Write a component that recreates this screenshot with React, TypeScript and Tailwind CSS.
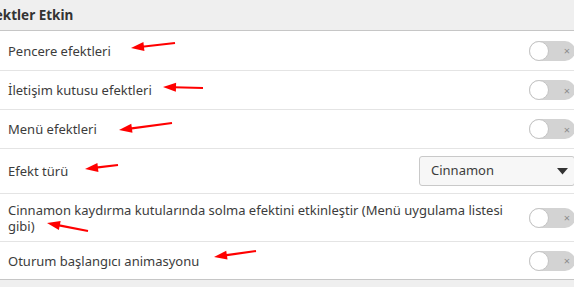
const font = { fontFamily: '"Noto Sans", "Open Sans", sans-serif' }

type Row = { label: string; kind: 'toggle' | 'select'; h: string }

const rows: Row[] = [
  { label: 'Pencere efektleri', kind: 'toggle', h: 'h-[39px]' },
  { label: 'İletişim kutusu efektleri', kind: 'toggle', h: 'h-[39px]' },
  { label: 'Menü efektleri', kind: 'toggle', h: 'h-[39px]' },
  { label: 'Efekt türü', kind: 'select', h: 'h-[45px]' },
  { label: 'Cinnamon kaydırma kutularında solma efektini etkinleştir (Menü uygulama listesi gibi)', kind: 'toggle', h: 'h-[48px]' },
  { label: 'Oturum başlangıcı animasyonu', kind: 'toggle', h: 'h-[38px]' },
]

const arrows: [number, number, number, number][] = [
  [175, 43, 131, 48],
  [203, 88, 163, 87],
  [172, 123, 119, 130],
  [118, 165, 85, 169],
  [88, 231, 47, 223],
  [256, 251, 214, 257],
]

function Toggle() {
  return (
    <div className="relative flex h-[20px] w-[46px] shrink-0 items-center rounded-full bg-[#d3d3d3]">
      <div className="h-[20px] w-[20px] rounded-full border border-[#c4c4c4] bg-white" />
      <span className="ml-auto mr-[5px] text-[11px] leading-none text-[#8c8c8c]">×</span>
    </div>
  )
}

function Select() {
  return (
    <div className="flex h-[30px] w-[156px] shrink-0 items-center rounded-[3px] border border-[#c9c9c9] bg-[#f7f7f7] pl-[11px] pr-[6px] text-[13px] text-[#3c3c3c]">
      <span>Cinnamon</span>
      <svg className="ml-auto" width="11" height="7" viewBox="0 0 11 7"><path d="M0 0h11L5.5 6.5z" fill="#333" /></svg>
    </div>
  )
}

function Arrow({ a }: { a: [number, number, number, number] }) {
  const [x1, y1, x2, y2] = a
  const dx = x2 - x1
  const dy = y2 - y1
  const len = Math.hypot(dx, dy)
  const ux = dx / len
  const uy = dy / len
  const bx = x2 - ux * 13
  const by = y2 - uy * 13
  const px = -uy * 4.5
  const py = ux * 4.5
  return (
    <g>
      <line x1={x1} y1={y1} x2={bx + ux * 2} y2={by + uy * 2} stroke="#ff0000" strokeWidth="2.2" />
      <polygon points={`${x2},${y2} ${bx + px},${by + py} ${bx - px},${by - py}`} fill="#ff0000" />
    </g>
  )
}

export default function App() {
  return (
    <div className="relative h-[287px] w-[574px] overflow-hidden bg-[#efefef]" style={font}>
      <div className="w-[583px]">
        <div className="flex h-[31px] items-center border-b border-[#c6c6c6] bg-[#efefef] pl-[8px]">
          <span className="-ml-[26px] text-[13.5px] font-bold text-[#333]">Efektler Etkin</span>
        </div>
        <div className="border-b border-[#c6c6c6] bg-white">
          {rows.map((r, i) => (
            <div
              key={r.label}
              className={`flex items-center gap-4 pl-[8px] pr-[8px] ${r.h} ${i > 0 ? 'border-t border-[#e4e4e4]' : ''}`}
            >
              <span className="max-w-[500px] text-[13px] leading-[16px] text-[#3c3c3c]">{r.label}</span>
              <div className="ml-auto">{r.kind === 'toggle' ? <Toggle /> : <Select />}</div>
            </div>
          ))}
        </div>
      </div>
      <svg className="pointer-events-none absolute inset-0" width="574" height="287">
        {arrows.map((a, i) => (
          <Arrow key={i} a={a} />
        ))}
      </svg>
    </div>
  )
}
